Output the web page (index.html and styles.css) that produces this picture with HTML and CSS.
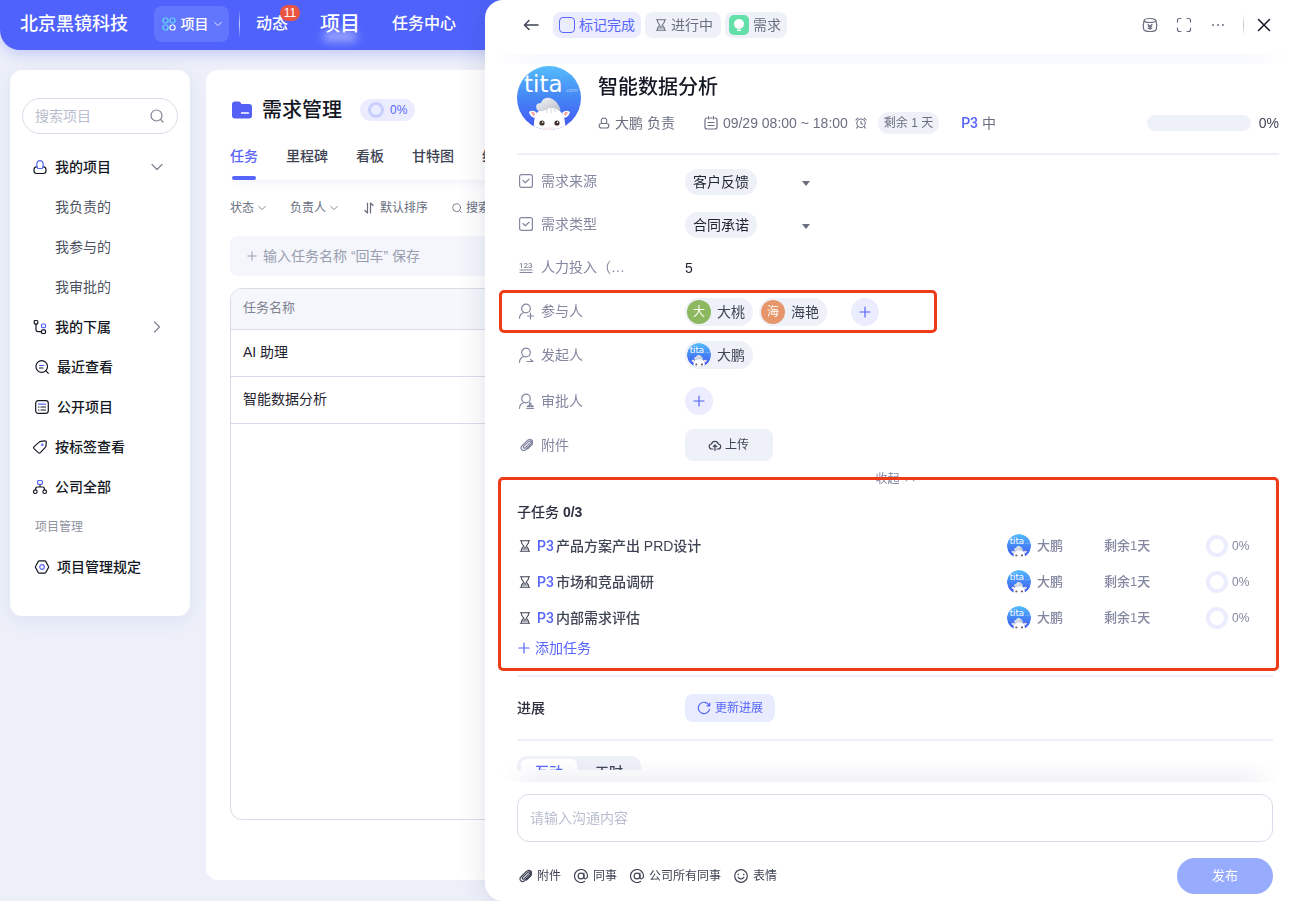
FILE: index.html
```html
<!DOCTYPE html>
<html lang="zh-CN">
<head>
<meta charset="utf-8">
<meta name="viewport" content="width=device-width, initial-scale=1">
<title>需求管理</title>
<link rel="stylesheet" href="styles.css">
</head>
<body>
<svg class="sprite" width="0" height="0" aria-hidden="true">
  <defs>
    <linearGradient id="sky" x1="0" y1="0" x2="0" y2="1">
      <stop offset="0" stop-color="#55bcfb"/><stop offset=".5" stop-color="#4585f6"/><stop offset="1" stop-color="#4455f2"/>
    </linearGradient>
    <linearGradient id="wool" x1="0" y1="0" x2="1" y2="1">
      <stop offset="0" stop-color="#f4f6f8"/><stop offset="1" stop-color="#b9bfc8"/>
    </linearGradient>
    <clipPath id="disc"><circle cx="32" cy="32" r="32"/></clipPath>
  </defs>
  <symbol id="avatar" viewBox="0 0 64 64">
    <g clip-path="url(#disc)">
      <rect width="64" height="64" fill="url(#sky)"/>
      <text x="7" y="26" class="logo-text">tita</text>
      <text x="48" y="26" class="logo-suffix">.com</text>
      <path d="M12 46q4-3 8 1l-2 5q-5-1-6-6zM53 46q-4-3-8 1l2 5q5-1 6-6z" fill="#fff"/>
      <path d="M14 46q3-1 4 2l-1 2q-2-1-3-4zM51 46q-3-1-4 2l1 2q2-1 3-4z" fill="#f3a7a0"/>
      <path d="M17 64q-2-22 15-23 18 1 16 23z" fill="#fff"/>
      <path d="M20 44q-3-7 4-7 2-6 9-5 6 2 9 8 2 3 1 5-5-4-11-3-6 5-12 2z" fill="url(#wool)"/>
      <path d="M30 42v5M34 41v6M38 42v4" stroke="#d2d6dc" stroke-width="1" fill="none"/>
      <circle cx="25" cy="57" r="2.600" fill="#43332f"/><circle cx="40" cy="57" r="2.600" fill="#43332f"/>
      <circle cx="25.600" cy="56.200" r=".8" fill="#fff"/><circle cx="40.600" cy="56.200" r=".8" fill="#fff"/>
      <ellipse cx="32" cy="64" rx="9" ry="3" fill="#fbeee9"/>
    </g>
  </symbol>
  <symbol id="down" viewBox="0 0 12 12"><path d="M1 3.500 6 8.500l5-5"/></symbol>
  <symbol id="search" viewBox="0 0 14 14"><circle cx="6.500" cy="6.500" r="5.500"/><path d="m10.700 10.700 2.300 2.300"/></symbol>
  <symbol id="plus" viewBox="0 0 12 12"><path d="M6 1v10M1 6h10"/></symbol>
  <symbol id="hourglass" viewBox="0 0 14 14"><path d="M1.500 1h11M1.500 13h11M3 1v2.500L5.500 7 3 10.500V13M11 1v2.500L8.500 7l2.500 3.500V13M4.500 10.500h5M6 8.500h2"/></symbol>
  <symbol id="check-field" viewBox="1 1 14 14"><rect x="1.600" y="1.600" width="12.800" height="12.800" rx="2"/><path d="m5 7.500 2.300 2.300L11 6.200"/></symbol>
  <symbol id="lock-person" viewBox="0 0 14 14"><path d="M4.500 7.500C3 5 3.500 1.200 7 1.200s4 3.800 2.500 6.300zM4.300 7.500H4a2.700 2.700 0 0 0 0 5.400h6a2.700 2.700 0 0 0 0-5.400h-.3"/></symbol>
  <symbol id="clip" viewBox="1 1 14 14"><path d="m12.800 5.200-5.600 5.600c-1 1-2.500-.2-1.500-1.400L10.500 4.600c2-1.800 4.300.4 2.500 2.500l-5.300 5.400c-2.800 2.600-6.300-.7-3.800-3.500L9 3.800c3.700-3.500 8 .6 4.600 4.200L9.500 12"/></symbol>
  <symbol id="at" viewBox="1 1 14 14"><circle cx="8" cy="8" r="2.900"/><path d="M10.900 5v4.300c0 2.300 3.600 2 3.600-1.300A6.500 6.500 0 1 0 11.500 13.500"/></symbol>
  <symbol id="person" viewBox="0 0 16 16"><circle cx="8" cy="5.500" r="4.300"/><path d="M1.500 15.300c0-3 1.800-5 4.500-5.800"/></symbol>
</svg>

<div class="app">
  <header class="topbar">
    <strong class="brand">北京黑镜科技</strong>
    <button class="switcher" type="button">
      <svg class="icon s14" viewBox="0 0 14 14"><g stroke="#62dcf8"><rect x="1" y="1" width="5" height="5" rx="2"/><rect x="1" y="8" width="5" height="5" rx="2"/><rect x="8" y="1" width="5" height="5" rx="2"/></g><rect x="8" y="8" width="5" height="5" rx="2" stroke="#fff"/></svg>
      <span>项目</span>
      <svg class="icon s8"><use href="#down"/></svg>
    </button>
    <i class="topbar-rule"></i>
    <nav class="topnav">
      <a href="#">动态<span class="badge">11</span></a>
      <a href="#" class="current">项目</a>
      <a href="#">任务中心</a>
    </nav>
  </header>

  <div class="workspace">
    <aside class="sidebar">
      <label class="side-search">
        <input type="text" placeholder="搜索项目" aria-label="搜索项目">
        <svg class="icon s14"><use href="#search"/></svg>
      </label>
      <nav class="side-nav">
        <a href="#" class="group"><svg class="icon s14" viewBox="0 0 14 14"><path d="M4 6.800H3.500q-2.500 0-2.500 3v.7Q1 13.500 3.500 13.500h7q2.500 0 2.500-3v-.7q0-3-2.500-3H10"/><path class="accent" d="M4.800 8.500C2.800 6 3.500.7 7 .7s4.200 5.300 2.200 7.800z"/></svg>我的项目<svg class="icon s12 arrow"><use href="#down"/></svg></a>
        <a href="#" class="leaf">我负责的</a>
        <a href="#" class="leaf">我参与的</a>
        <a href="#" class="leaf">我审批的</a>
        <a href="#" class="group"><svg class="icon s14" viewBox="0 0 14 14"><rect x="1.200" y=".5" width="3.600" height="3.600" rx="1"/><rect x="8.500" y="9.900" width="4" height="3.600" rx="1"/><path d="M3 4.200v5.300q0 2.200 2 2.200h3.500"/><rect class="accent" x="8.500" y="4" width="4" height="3.600" rx="1"/></svg>我的下属<svg class="icon s12 arrow turned"><use href="#down"/></svg></a>
        <a href="#" class="group wide"><svg class="icon s14" viewBox="0 0 14 14"><circle cx="6.700" cy="6.500" r="5.800"/><path d="m10.800 10.700 2.500 2.600M4.500 8h3.500"/><path class="accent" d="M4.500 5.500H9"/></svg>最近查看</a>
        <a href="#" class="group wide"><svg class="icon s14" viewBox="0 0 14 14"><rect x=".7" y=".7" width="12.600" height="12.600" rx="2.500"/><path d="M3.500 7h.5M6 7h4.500M3.500 10h.5M6 10h4.500"/><path class="accent" d="M3.500 4.200h7"/></svg>公开项目</a>
        <a href="#" class="group"><svg class="icon s14" viewBox="0 0 14 14"><path d="M8 1.300 12 .8q1.400 0 1.300 1.200L12.900 6q0 .8-.6 1.400l-5 5.200q-1 .9-2 0L1 8.600q-1-1 0-2L6.500 1.900z"/><circle class="accent" cx="9.300" cy="4.800" r=".6"/></svg>按标签查看</a>
        <a href="#" class="group"><svg class="icon s14" viewBox="0 0 14 14"><circle cx="2.300" cy="11.700" r="1.800"/><circle cx="11.700" cy="11.700" r="1.800"/><path d="M2.500 9.500Q2.500 7 4.500 7h5q2 0 2 2.500M7 4.500V7"/><rect class="accent" x="4.600" y=".5" width="4.800" height="3.800" rx="1"/></svg>公司全部</a>
        <span class="section">项目管理</span>
        <a href="#" class="group wide"><svg class="icon s14" viewBox="0 0 14 14"><path d="M4.200.9h5.600q.6 0 .9.500L13.500 6.500q.3.500 0 1l-2.800 5.100q-.3.500-.9.500H4.200q-.6 0-.9-.5L.5 7.500q-.3-.5 0-1L3.300 1.400q.3-.5.9-.5z"/><circle class="accent" cx="7" cy="7" r="2.300"/></svg>项目管理规定</a>
      </nav>
    </aside>

    <main class="board">
      <div class="board-title">
        <svg class="folder" viewBox="0 0 20 18"><path d="M0 3.500Q0 .500 3 .500h4q1.500 0 2.500 2.500H17q3 0 3 3v8.500q0 3-3 3H3q-3 0-3-3z" fill="#5561f5"/><path d="M9.500 12h7" stroke="#fff" stroke-width="1.500" stroke-linecap="round"/></svg>
        <h1>需求管理</h1>
        <span class="ratio"><i class="ring small"></i>0%</span>
      </div>
      <nav class="tabs">
        <a href="#" class="current">任务</a><a href="#">里程碑</a><a href="#">看板</a><a href="#">甘特图</a><a href="#">绩效</a>
      </nav>
      <div class="filters">
        <button type="button">状态<svg class="icon s8"><use href="#down"/></svg></button>
        <button type="button">负责人<svg class="icon s8"><use href="#down"/></svg></button>
        <button type="button"><svg class="icon s14" viewBox="0 0 14 14"><path d="M5.500 2v10L3 9.500M8.500 12V2l2.500 2.500"/></svg>默认排序</button>
        <button type="button"><svg class="icon s10"><use href="#search"/></svg>搜索</button>
      </div>
      <label class="quick-add">
        <svg class="icon s10"><use href="#plus"/></svg>
        <input type="text" placeholder="输入任务名称 “回车” 保存" aria-label="输入任务名称">
      </label>
      <div class="table-frame">
        <table>
          <thead><tr><th scope="col">任务名称</th></tr></thead>
          <tbody><tr><td>AI 助理</td></tr><tr><td>智能数据分析</td></tr></tbody>
        </table>
      </div>
    </main>
  </div>
</div>

<section class="drawer" aria-label="任务详情">
  <header class="drawer-bar">
    <button class="bare" type="button" aria-label="返回"><svg class="icon s16 dark" viewBox="0 0 16 16"><path d="M15 8H1.500M6 3.500 1.500 8 6 12.500"/></svg></button>
    <div class="chips">
      <label class="chip done"><input type="checkbox">标记完成</label>
      <button class="chip state" type="button"><svg class="icon s12"><use href="#hourglass"/></svg>进行中</button>
      <span class="chip kind"><svg class="bulb" viewBox="0 0 20 20"><rect width="20" height="20" rx="5" fill="#63e0a9"/><circle cx="10" cy="9" r="5" fill="#fff"/><path d="M8 13h4v3H8z" fill="#fff"/><path d="M7.500 14.300h5" stroke="#63e0a9" stroke-width=".8"/></svg>需求</span>
    </div>
    <div class="drawer-tools">
      <button class="bare" type="button" aria-label="积分"><svg class="icon s16" viewBox="0 0 16 16"><ellipse cx="8" cy="3.500" rx="5.800" ry="2"/><path d="M2.200 3.500Q.700 7.500 1.600 12q.6 2.500 6.400 2.500T14.400 12q.9-4.500-.6-8.500M6 7.500l2 2 2-2M8 9.500v3M6.200 9.800h3.600M6.200 11.500h3.600"/></svg></button>
      <button class="bare" type="button" aria-label="全屏"><svg class="icon s16" viewBox="0 0 16 16"><path d="M1.500 5V3.500q0-2 2-2H5M11 1.500h1.500q2 0 2 2V5M14.500 11v1.500q0 2-2 2H11M5 14.500H3.500q-2 0-2-2V11"/></svg></button>
      <button class="bare" type="button" aria-label="更多"><svg class="s16 dots" viewBox="0 0 16 16"><circle cx="3" cy="8" r="1"/><circle cx="8" cy="8" r="1"/><circle cx="13" cy="8" r="1"/></svg></button>
      <i class="tool-rule"></i>
      <button class="bare" type="button" aria-label="关闭"><svg class="icon s16 close" viewBox="0 0 16 16"><path d="m2.500 2.500 11 11M13.500 2.500l-11 11"/></svg></button>
    </div>
  </header>

  <div class="hero">
    <svg class="portrait" role="img" aria-label="大鹏"><use href="#avatar"/></svg>
    <div class="hero-text">
      <h2>智能数据分析</h2>
      <div class="meta">
        <span class="owner"><svg class="icon s12"><use href="#lock-person"/></svg>大鹏 负责</span>
        <span class="when"><svg class="icon s14" viewBox="0 0 14 14"><path d="M3 2H2.500Q1 2 1 4v7q0 2 2 2h8q2 0 2-2V4q0-2-1.500-2H11M6 2h2M4.500.5v2.500M9.500.5v2.500M4 6.500h6M4 9.500h6"/></svg><time>09/29 08:00 ~ 18:00</time><svg class="icon s12 alarm" viewBox="0 0 14 14"><circle cx="7" cy="7.300" r="4.900"/><path d="M7 5v2.700l2 .8M1 3.500 3.200 1.300M13 3.500l-2.200-2.200M3.300 11.300 2 13M10.700 11.300 12 13"/></svg></span>
        <span class="left-days">剩余 1 天</span>
        <span class="priority"><b>P3</b> 中</span>
        <span class="progress"><i class="track"></i>0%</span>
      </div>
    </div>
  </div>

  <div class="drawer-body">
    <div class="field">
      <label class="name" for="source"><svg class="icon s14"><use href="#check-field"/></svg>需求来源</label>
      <div class="picker"><select id="source"><option>客户反馈</option></select><i class="caret"></i></div>
    </div>
    <div class="field">
      <label class="name" for="type"><svg class="icon s14"><use href="#check-field"/></svg>需求类型</label>
      <div class="picker"><select id="type"><option>合同承诺</option></select><i class="caret"></i></div>
    </div>
    <div class="field">
      <span class="name"><svg class="icon s14" viewBox="0 0 14 14"><text x="0" y="8" class="digits">123</text><path d="M1 10h12M1 12.500h12"/></svg>人力投入（…</span>
      <span class="number">5</span>
    </div>
    <div class="field people marked">
      <span class="name"><svg class="icon s14" viewBox="1 1 14 14"><use href="#person" width="16" height="16"/><path d="M12.500 10v6M9.500 13h6"/></svg>参与人</span>
      <div class="members">
        <span class="member"><i class="face green">大</i>大桃</span>
        <span class="member"><i class="face orange">海</i>海艳</span>
        <button class="add spaced" type="button" aria-label="添加参与人"><svg class="icon s12"><use href="#plus"/></svg></button>
      </div>
    </div>
    <div class="field people">
      <span class="name"><svg class="icon s14" viewBox="1 1 14 14"><use href="#person" width="16" height="16"/><path d="M9 14.500h6l-2.500-2"/></svg>发起人</span>
      <span class="member"><svg class="face"><use href="#avatar"/></svg>大鹏</span>
    </div>
    <div class="field approver">
      <span class="name"><svg class="icon s14" viewBox="1 1 14 14"><use href="#person" width="16" height="16"/><path d="M8.800 15.300H15.500M9.300 13.300h6L13 12.300V10.200h-1.500v2.100z"/></svg>审批人</span>
      <button class="add" type="button" aria-label="添加审批人"><svg class="icon s12"><use href="#plus"/></svg></button>
    </div>
    <div class="field files">
      <span class="name"><svg class="icon s14"><use href="#clip"/></svg>附件</span>
      <button class="upload" type="button"><svg class="icon s12" viewBox="0 0 12 12"><path d="M4 10H3A2.500 2.500 0 0 1 2.500 5 3.500 3.500 0 0 1 9.300 5 2.500 2.500 0 0 1 9 10H8M6 11.500V6M4.300 7.600 6 6l1.700 1.600"/></svg>上传</button>
    </div>
    <button class="collapse" type="button">收起<svg class="icon s10 flipped"><use href="#down"/></svg></button>

    <section class="subtasks marked">
      <h3>子任务 <b>0/3</b></h3>
      <ul>
        <li><span class="task"><svg class="icon s12"><use href="#hourglass"/></svg><b>P3</b>产品方案产出 PRD设计</span><span class="who"><svg class="face"><use href="#avatar"/></svg>大鹏</span><span>剩余1天</span><span class="pct"><i class="ring"></i>0%</span></li>
        <li><span class="task"><svg class="icon s12"><use href="#hourglass"/></svg><b>P3</b>市场和竞品调研</span><span class="who"><svg class="face"><use href="#avatar"/></svg>大鹏</span><span>剩余1天</span><span class="pct"><i class="ring"></i>0%</span></li>
        <li><span class="task"><svg class="icon s12"><use href="#hourglass"/></svg><b>P3</b>内部需求评估</span><span class="who"><svg class="face"><use href="#avatar"/></svg>大鹏</span><span>剩余1天</span><span class="pct"><i class="ring"></i>0%</span></li>
      </ul>
      <button class="add-task" type="button"><svg class="icon s12"><use href="#plus"/></svg>添加任务</button>
    </section>

    <section class="update-row">
      <h3>进展</h3>
      <button class="update" type="button"><svg class="icon s14" viewBox="0 0 14 14"><path d="M12.500 8.500A5.700 5.700 0 1 1 12 4.200M12.700 2v2.800H10"/></svg>更新进展</button>
    </section>

    <div class="switch">
      <button class="current" type="button">互动</button><button type="button">工时</button>
    </div>
  </div>

  <footer class="composer">
    <input type="text" placeholder="请输入沟通内容" aria-label="沟通内容">
    <div class="composer-row">
      <button type="button"><svg class="icon s14"><use href="#clip"/></svg>附件</button>
      <button type="button"><svg class="icon s14"><use href="#at"/></svg>同事</button>
      <button type="button"><svg class="icon s14"><use href="#at"/></svg>公司所有同事</button>
      <button type="button"><svg class="icon s14" viewBox="0 0 14 14"><circle cx="7" cy="7" r="6.300"/><path d="M4.200 5v.8M9.800 5v.8M4.200 8.300q2.800 3.400 5.600 0"/></svg>表情</button>
      <button class="publish" type="button">发布</button>
    </div>
  </footer>
</section>
</body>
</html>
```
FILE: styles.css
```css
*, *::before, *::after { box-sizing: border-box; }

body {
  margin: 0;
  font: 14px/20px "Liberation Sans", "Noto Sans CJK SC", sans-serif;
  color: #3f4455;
  background: #edf0f9;
}

h1, h2, h3, ul { margin: 0; padding: 0; list-style: none; font-weight: 500; }
a { color: inherit; text-decoration: none; }
button, input, select { margin: 0; padding: 0; border: 0; background: none; font: inherit; color: inherit; }
button { display: inline-flex; align-items: center; justify-content: center; cursor: pointer; }
input { outline: 0; min-width: 0; }

.sprite { position: absolute; }
.icon { fill: none; stroke: currentColor; stroke-width: 1.2; stroke-linecap: round; stroke-linejoin: round; flex: none; overflow: visible; }
.accent { stroke: #5765fb; }
.s8 { width: 8px; height: 8px; }
.s10 { width: 10px; height: 10px; }
.s12 { width: 12px; height: 12px; }
.s14 { width: 14px; height: 14px; }
.s16 { width: 16px; height: 16px; }
.logo-text { font: 23px "DejaVu Sans", sans-serif; fill: #fff; }
.logo-suffix { font: 6px Lato, sans-serif; fill: #a9cdfb; }
.digits { font: 500 8px Roboto, sans-serif; fill: currentColor; stroke: none; }

/* application behind the drawer */
.app { display: flex; flex-direction: column; height: 100vh; overflow: hidden; }
.topbar {
  display: flex; align-items: center; flex: none; height: 50px; padding: 0 20px 3px;
  color: #fff; background: #4f63fc; border-bottom-left-radius: 20px;
  box-shadow: 0 4px 14px rgba(79, 99, 252, .28); white-space: nowrap;
}
.brand { font-size: 18px; line-height: 28px; font-weight: 500; }
.switcher { gap: 5px; width: 75px; height: 36px; margin-left: 26px; border-radius: 8px; background: #6275fd; font-weight: 500; }
.topbar-rule { width: 1px; height: 28px; margin: 0 16px 0 10px; background: linear-gradient(transparent, #cdd3ff, transparent); }
.topnav { display: flex; align-items: center; gap: 32px; font-size: 16px; line-height: 24px; font-weight: 500; }
.topnav a { position: relative; }
.topnav .current { font-size: 20px; line-height: 30px; }
.topnav .current::after { content: ""; position: absolute; left: 4px; right: 4px; bottom: -2px; height: 9px; background: rgba(255, 255, 255, .5); filter: blur(5px); }
.badge { position: absolute; left: 24px; top: -7px; width: 20px; height: 16px; border-radius: 8px; background: #ea5443; font-size: 12px; line-height: 16px; font-weight: 400; text-align: center; }

.workspace { display: flex; align-items: flex-start; gap: 16px; flex: 1; min-height: 0; padding: 20px 10px 21px; }
.sidebar { flex: none; width: 180px; padding: 28px 12px 29px; border-radius: 12px; background: #fff; box-shadow: 0 4px 18px rgba(90, 110, 190, .1); }
.side-search { display: flex; align-items: center; height: 36px; padding: 0 13px 0 12px; border: 1px solid #d9daea; border-radius: 18px; color: #7f8392; }
.side-search input { flex: 1; }
::placeholder { color: #b9bed0; opacity: 1; }
.side-nav { display: flex; flex-direction: column; margin-top: 13px; color: #141824; }
.side-nav > * { display: flex; align-items: center; height: 40px; padding-left: 11px; }
.side-nav .group { gap: 8px; font-weight: 500; }
.side-nav .wide { padding-left: 13px; }
.side-nav .leaf { padding-left: 33px; color: #4c5161; }
.side-nav .section { padding-left: 13px; font-size: 12px; color: #8e92a2; }
.side-nav .arrow { margin: 0 15px 0 auto; color: #7f8392; }
.turned { transform: rotate(-90deg); }
.flipped { transform: rotate(180deg); }

.board { display: flex; flex-direction: column; flex: 1; align-self: stretch; min-width: 0; padding: 26px 24px 60px; border-radius: 12px; background: #fff; }
.board-title { display: flex; align-items: center; height: 28px; }
.folder { width: 20px; height: 18px; margin: 0 10px 0 2px; }
.board-title h1 { font-size: 20px; line-height: 30px; color: #141824; }
.ratio { display: flex; align-items: center; gap: 6px; height: 22px; margin-left: 18px; padding: 0 8px; border-radius: 11px; background: #ebedfe; color: #5765fb; font-size: 12px; }
.ring { flex: none; width: 22px; height: 22px; border: 4px solid #ebedfe; border-radius: 50%; }
.ring.small { width: 16px; height: 16px; border: 3px solid #c9cffd; }
.tabs { display: flex; gap: 28px; margin-top: 8px; font-weight: 500; box-shadow: 0 8px 10px -6px rgba(90, 110, 190, .1); }
.tabs a { position: relative; line-height: 48px; }
.tabs .current { color: #5765fb; }
.tabs .current::after { content: ""; position: absolute; left: 2px; right: 2px; bottom: 0; height: 4px; border-radius: 2px; background: #5765fb; }
.filters { display: flex; gap: 24px; height: 24px; margin: 16px 0; font-size: 12px; color: #686d7e; }
.filters button { gap: 4px; }
.quick-add { display: flex; align-items: center; gap: 6px; height: 40px; padding: 0 17px; border-radius: 8px; background: #f4f6fc; color: #9a9eae; }
.quick-add input { flex: 1; }
.quick-add ::placeholder { color: #9a9eae; }
.table-frame { flex: 1; margin-top: 12px; border: 1px solid #d9dce8; border-radius: 12px; overflow: hidden; }
table { width: 100%; border-collapse: collapse; }
th, td { height: 47px; padding: 0 12px 2px; border-bottom: 1px solid #d9dce8; text-align: left; color: #1f2330; }
th { height: 40px; background: #f5f7fc; color: #7f8392; font-size: 13px; font-weight: 400; }

/* detail drawer */
.drawer {
  position: fixed; top: 0; right: 0; bottom: 0; left: 485px; display: flex; flex-direction: column;
  border-radius: 18px 0 0 18px; background: #fff; box-shadow: 0 0 28px rgba(40, 50, 90, .14);
}
.drawer-bar { display: flex; align-items: center; flex: none; height: 54px; padding: 0 24px 4px 38px; color: #6a6e80; }
.drawer-bar::after { content: ""; position: absolute; left: 8px; right: 8px; top: 54px; height: 10px; background: linear-gradient(90deg, #fff, #f8f9fe 6%, #f8f9fe 94%, #fff); }
.dark { color: #3f4455; stroke-width: 1.5; }
.close { color: #141824; stroke-width: 1.5; }
.dots { fill: currentColor; }
.chips { display: flex; gap: 4px; margin-left: 14px; }
.chip { display: flex; align-items: center; gap: 4px; height: 26px; padding: 0 6px; border-radius: 8px; background: #eff1f9; }
.chip.done { background: #ebedfe; color: #5765fb; }
.chip.state { padding: 0 8px 0 10px; }
.chip.kind { padding-left: 4px; }
.chip input { appearance: none; width: 16px; height: 16px; border: 1px solid #5765fb; border-radius: 4px; }
.bulb { width: 20px; height: 20px; }
.drawer-tools { display: flex; align-items: center; gap: 18px; margin-left: auto; }
.tool-rule { width: 1px; height: 22px; margin: 0 -6px 0 -1px; background: linear-gradient(transparent, #c0c3d0, transparent); }

.hero { display: flex; gap: 17px; flex: none; margin: 10px 17px 0 32px; padding: 2px 0 19px; border-bottom: 2px solid #eff0f7; }
.portrait { flex: none; width: 64px; height: 64px; }
.hero-text { flex: 1; padding-top: 6px; }
.hero h2 { font-size: 20px; line-height: 30px; color: #141824; }
.meta { display: flex; align-items: center; height: 22px; margin-top: 10px; color: #6a6e80; white-space: nowrap; }
.owner, .when { display: flex; align-items: center; gap: 5px; }
.when { margin-left: 29px; }
.alarm { margin-left: 2px; }
.left-days { margin-left: 11px; padding: 0 6px; border-radius: 11px; background: #eff1f9; font-size: 12px; line-height: 22px; }
.priority { margin-left: 22px; }
.priority b { color: #5765fb; font-family: Roboto, sans-serif; font-weight: 500; }
.progress { display: flex; align-items: center; gap: 8px; margin-left: auto; color: #3f4455; }
.track { width: 104px; height: 16px; border-radius: 8px; background: #eff1f9; }

.drawer-body { flex: 1; min-height: 0; overflow: hidden; padding: 4px 23px 0 32px; }
.field { display: flex; align-items: center; height: 43px; }
.field .name { display: flex; align-items: center; gap: 8px; flex: none; width: 168px; padding-left: 2px; color: #8387a0; }
.field.people { height: 44px; }
.field.approver { height: 48px; }
.field.files { height: 40px; }
.picker { display: flex; align-items: center; gap: 45px; padding-top: 2px; }
.picker select { appearance: none; height: 26px; padding: 0 8px; border-radius: 13px; background: #eff1f9; color: #1f2330; }
.caret { margin-top: 4px; border: 4px solid transparent; border-top: 5px solid #6a6e80; border-bottom: 0; }
.number { padding-top: 2px; color: #1f2330; }
.members { display: flex; align-items: center; gap: 6px; padding-top: 2px; }
.member { display: flex; align-items: center; gap: 6px; height: 28px; padding: 0 8px 0 2px; border-radius: 14px; background: #eff1f9; }
.face { flex: none; width: 24px; height: 24px; border-radius: 50%; color: #fff; font-size: 12px; line-height: 24px; font-style: normal; text-align: center; }
.green { background: #8cb860; }
.orange { background: #e6966a; }
.add { width: 28px; height: 28px; border-radius: 50%; background: #ebedfe; color: #5765fb; }
.add.spaced { margin-left: 18px; }
.upload { gap: 4px; width: 88px; height: 32px; border-radius: 8px; background: #eff1f9; font-size: 12px; }
.collapse { display: flex; gap: 5px; height: 28px; margin: 0 auto; font-size: 12px; color: #8387a0; }

/* highlight frames drawn over the content */
.marked { position: relative; }
.marked::after { content: ""; position: absolute; border: 3px solid #ec3b16; border-radius: 5px; pointer-events: none; }
.people.marked { height: 45px; }
.people.marked::after { left: -18px; top: 2px; bottom: 0; width: 438px; }
.subtasks.marked::after { left: -19px; right: -6px; top: -16px; bottom: 4px; }

.subtasks { padding: 3px 0 15px; border-bottom: 2px solid #eff0f7; }
h3 { font-size: 14px; line-height: 32px; color: #2c3040; }
.subtasks li { display: grid; grid-template-columns: 1fr 97px 102px 67px; align-items: center; height: 36px; font-size: 13px; color: #8387a0; }
.task { display: flex; align-items: center; padding-left: 2px; font-size: 14px; color: #3f4455; }
.task b { margin: 0 2px 0 6px; font: 500 14px Roboto, sans-serif; color: #5765fb; }
.who { display: flex; align-items: center; gap: 6px; }
.pct { display: flex; align-items: center; gap: 4px; font-size: 12px; }
.add-task { gap: 5px; height: 24px; padding-left: 1px; color: #5765fb; }
.update-row { display: flex; align-items: center; height: 64px; border-bottom: 2px solid #eff0f7; }
.update-row h3 { width: 168px; }
.update { gap: 4px; width: 90px; height: 28px; border-radius: 8px; background: #e8ecfe; color: #5765fb; font-size: 12px; }
.switch { display: inline-flex; gap: 4px; margin-top: 15px; padding: 3px 4px; border-radius: 10px; background: #eff1f9; }
.switch button { width: 56px; height: 26px; border-radius: 6px; font-weight: 500; }
.switch .current { background: #fff; color: #5765fb; }

.composer { position: relative; flex: none; padding: 24px 23px 7px 32px; }
.composer::before { content: ""; position: absolute; left: 16px; right: 16px; top: -10px; height: 22px; background: linear-gradient(transparent, rgba(120, 130, 170, .1)); -webkit-mask: linear-gradient(90deg, transparent, #000 5%, #000 95%, transparent); mask: linear-gradient(90deg, transparent, #000 5%, #000 95%, transparent); }
.composer > input { display: block; width: 100%; height: 48px; padding: 0 12px; border: 1px solid #d9daea; border-radius: 12px; }
.composer-row { display: flex; align-items: center; gap: 13px; height: 36px; margin-top: 16px; padding-left: 1px; font-size: 12px; }
.composer-row button { gap: 5px; }
.composer-row .publish { width: 96px; height: 36px; margin-left: auto; border-radius: 18px; background: #98acfe; color: #fff; font-size: 13px; }
```
